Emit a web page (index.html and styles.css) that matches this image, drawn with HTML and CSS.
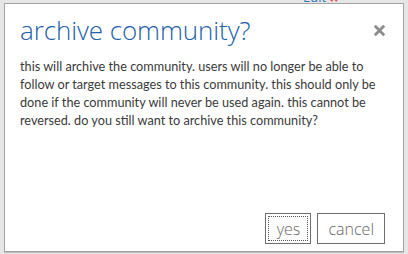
FILE: index.html
```html
<!DOCTYPE html>
<html lang="en">

<head>
    <meta charset="UTF-8">
    <meta name="viewport" content="width=device-width, initial-scale=1.0">
    <link rel="stylesheet" href="styles.css">
    <title>archive community?</title>
</head>

<body>
    <div class="backdrop">
        <span class="edit-link">Edit <span class="edit-dots">&#9830;&#9830;</span></span>
    </div>
    <div class="dialog">
        <div class="dialog-head">
            <h1 class="dialog-title">archive community?</h1>
            <button type="button" class="close-btn" aria-label="close">
                <svg width="13" height="13" viewBox="0 0 13 13">
                    <path d="M1.8 1.8 L11.2 11.2 M11.2 1.8 L1.8 11.2" stroke="#8c8c8c" stroke-width="2.8" fill="none" />
                </svg>
            </button>
        </div>
        <p class="dialog-text">this will archive the community. users will no longer be able to follow or target
            messages to this community. this should only be done if the community will never be used again. this
            cannot be reversed. do you still want to archive this community?</p>
        <div class="dialog-buttons">
            <button type="button" class="btn btn-focus">yes</button>
            <button type="button" class="btn">cancel</button>
        </div>
    </div>
</body>

</html>
```

FILE: styles.css
```css
body {
    margin: 0;
    background-color: #e6e6e6;
    width: 408px;
    height: 254px;
    overflow: hidden;
}

.backdrop {
    height: 3px;
    overflow: hidden;
    position: relative;
}

.edit-link {
    position: absolute;
    left: 303px;
    top: -12px;
    font-family: "Open Sans", sans-serif;
    font-size: 13px;
    color: #2a7ab8;
}

.edit-dots {
    color: #d9534f;
    font-size: 9px;
}

.dialog {
    margin: 0 4px;
    width: 398px;
    height: 247px;
    background-color: #fff;
    border: 1px solid #a3a3a3;
    box-shadow: 0 1px 0 #bdbdbd;
    display: flex;
    flex-direction: column;
}

.dialog-head {
    display: flex;
    align-items: center;
    justify-content: space-between;
    padding: 8px 17px 0 15px;
    height: 36px;
}

.dialog-title {
    margin: 0;
    font-family: "Open Sans", sans-serif;
    font-weight: 300;
    font-size: 26px;
    color: #235fab;
    letter-spacing: -0.1px;
}

.close-btn {
    border: none;
    background: none;
    padding: 0;
    width: 13px;
    height: 13px;
}

.close-btn svg {
    display: block;
}

.dialog-text {
    margin: 9px 12px 0 15px;
    font-family: Lato, sans-serif;
    font-size: 12.7px;
    line-height: 18px;
    color: #3a3a3a;
}

.dialog-buttons {
    margin-top: auto;
    display: flex;
    justify-content: flex-end;
    gap: 6px;
    padding: 0 18px 7px 0;
}

.btn {
    height: 31px;
    min-width: 46px;
    padding: 0 10px;
    background: #fff;
    border: 1px solid #6e6e6e;
    font-family: "Open Sans", sans-serif;
    font-weight: 300;
    font-size: 16px;
    color: #666;
}

.btn-focus {
    outline: 1px dotted #555;
    outline-offset: -4px;
}
```
